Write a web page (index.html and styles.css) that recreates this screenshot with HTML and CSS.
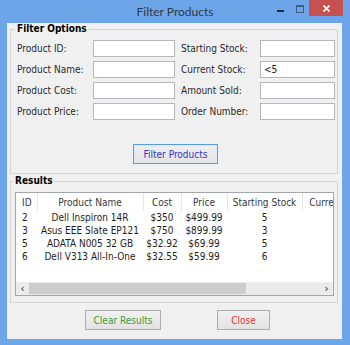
FILE: index.html
```html
<!DOCTYPE html>
<html lang="en">
<head>
    <meta charset="UTF-8">
    <title>Filter Products</title>
    <link rel="stylesheet" href="styles.css">
</head>
<body>
    <div class="window">
        <div class="title-bar">
            <span></span>
            <span class="title">Filter Products</span>
            <div class="controls">
                <span class="ctl-min"></span>
                <span class="ctl-max"></span>
                <span class="ctl-close">
                    <svg width="7" height="7" viewBox="0 0 7 7"><path d="M0.5 0.5L6.5 6.5M6.5 0.5L0.5 6.5" stroke="#fff" stroke-width="1.6"/></svg>
                </span>
            </div>
        </div>
        <div class="client">
            <fieldset class="group filters">
                <legend>Filter Options</legend>
                <div class="fields">
                    <label for="pid">Product ID:</label>
                    <input type="text" id="pid">
                    <label for="sstock">Starting Stock:</label>
                    <input type="text" id="sstock">

                    <label for="pname">Product Name:</label>
                    <input type="text" id="pname">
                    <label for="cstock">Current Stock:</label>
                    <input type="text" id="cstock" value="&lt;5">

                    <label for="pcost">Product Cost:</label>
                    <input type="text" id="pcost">
                    <label for="sold">Amount Sold:</label>
                    <input type="text" id="sold">

                    <label for="pprice">Product Price:</label>
                    <input type="text" id="pprice">
                    <label for="order">Order Number:</label>
                    <input type="text" id="order">
                </div>
                <div class="actions">
                    <button type="button" class="btn btn-filter">Filter Products</button>
                </div>
            </fieldset>
            <fieldset class="group results">
                <legend>Results</legend>
                <div class="listview">
                    <div class="lv-view">
                        <table>
                            <colgroup>
                                <col style="width: 21px">
                                <col style="width: 106px">
                                <col style="width: 38px">
                                <col style="width: 46px">
                                <col style="width: 75px">
                                <col style="width: 76px">
                            </colgroup>
                            <thead>
                                <tr>
                                    <th class="col-id">ID</th>
                                    <th>Product Name</th>
                                    <th>Cost</th>
                                    <th>Price</th>
                                    <th>Starting Stock</th>
                                    <th>Current Stock</th>
                                </tr>
                            </thead>
                            <tbody>
                                <tr><td class="col-id">2</td><td>Dell Inspiron 14R</td><td>$350</td><td>$499.99</td><td>5</td><td></td></tr>
                                <tr><td class="col-id">3</td><td>Asus EEE Slate EP121</td><td>$750</td><td>$899.99</td><td>3</td><td></td></tr>
                                <tr><td class="col-id">5</td><td>ADATA N005 32 GB</td><td>$32.92</td><td>$69.99</td><td>5</td><td></td></tr>
                                <tr><td class="col-id">6</td><td>Dell V313 All-In-One</td><td>$32.55</td><td>$59.99</td><td>6</td><td></td></tr>
                            </tbody>
                        </table>
                    </div>
                    <div class="hscroll">
                        <span class="arrow">&#8249;</span>
                        <div class="track"><div class="thumb"></div></div>
                        <span class="arrow">&#8250;</span>
                    </div>
                </div>
            </fieldset>
            <div class="footer">
                <button type="button" class="btn btn-clear">Clear Results</button>
                <button type="button" class="btn btn-close">Close</button>
            </div>
        </div>
    </div>
</body>
</html>
```

FILE: styles.css
```css
body {
    margin: 0;
    font-family: "DejaVu Sans Condensed", "DejaVu Sans", sans-serif;
    font-size: 10px;
    color: #1e1e1e;
}

.window {
    width: 350px;
    height: 345px;
    box-sizing: border-box;
    background: #6ca6e8;
    padding: 0 8px 6px 7px;
    display: flex;
    flex-direction: column;
}

.title-bar {
    height: 23px;
    margin: 0 -8px 0 -7px;
    display: grid;
    grid-template-columns: 1fr auto 1fr;
    align-items: center;
}

.title {
    font-family: Lato, sans-serif;
    font-size: 12px;
    color: #2d3a48;
}

.controls {
    justify-self: end;
    align-self: start;
    display: flex;
    align-items: flex-start;
    padding-right: 7px;
}

.ctl-min {
    width: 7px;
    height: 2px;
    margin-top: 10px;
    background: #1f2b38;
}

.ctl-max {
    width: 8px;
    height: 8px;
    box-sizing: border-box;
    margin: 5px 5px 0 12px;
    border: 1px solid #3d5f88;
    border-top-width: 2px;
}

.ctl-close {
    width: 34px;
    height: 16px;
    background: #c75050;
    display: flex;
    align-items: center;
    justify-content: center;
}

.client {
    flex: 1;
    background: #f0f0f0;
    display: flex;
    flex-direction: column;
}

.group {
    margin: 0 4px 0 3px;
    border: 1px solid #d5d5d5;
    min-width: 0;
}

.group legend {
    font-weight: bold;
    line-height: 12px;
    padding: 0 2px;
    margin-left: -2px;
    color: #000;
}

.filters {
    padding: 5px 3px 9px 6px;
}

.fields {
    display: grid;
    grid-template-columns: 76px 88px 79px 75px;
    grid-auto-rows: 17px;
    row-gap: 4px;
    align-items: center;
}

.fields label {
    color: #2a2a2a;
}

.fields input {
    box-sizing: border-box;
    width: 82px;
    height: 17px;
    margin: 0;
    padding: 0 3px;
    border: 1px solid #b4b6bb;
    background: #fff;
    font: inherit;
    color: #1e1e1e;
    outline: none;
}

.fields input:nth-of-type(even) {
    width: 75px;
}

.actions {
    display: flex;
    justify-content: center;
    margin-top: 24px;
}

.btn {
    box-sizing: border-box;
    height: 20px;
    padding: 0;
    border: 1px solid #adadad;
    background: linear-gradient(#f0f0f0, #e3e3e3);
    font: inherit;
    cursor: pointer;
}

.btn-filter {
    width: 85px;
    border-color: #5b9be0;
    box-shadow: inset 0 0 0 1px #dfe9f5;
    color: #3a32c8;
}

.results {
    margin-top: 1px;
    padding: 5px 3px 6px 4px;
}

.listview {
    height: 104px;
    box-sizing: border-box;
    border: 1px solid #a3a7ad;
    background: #fff;
    display: flex;
    flex-direction: column;
}

.lv-view {
    flex: 1;
    overflow: hidden;
}

.lv-view table {
    table-layout: fixed;
    width: 362px;
    border-collapse: collapse;
}

.lv-view th {
    height: 18px;
    padding: 0;
    font-weight: normal;
    color: #333a44;
    white-space: nowrap;
    overflow: hidden;
    border-right: 1px solid #e5e5e5;
}

.lv-view td {
    height: 13px;
    padding: 0;
    text-align: center;
    white-space: nowrap;
    color: #1e1e1e;
}

.lv-view .col-id {
    text-align: left;
    padding-left: 6px;
}

.hscroll {
    height: 13px;
    display: flex;
    align-items: stretch;
    background: #ebebeb;
}

.hscroll .arrow {
    width: 13px;
    display: flex;
    align-items: center;
    justify-content: center;
    font-weight: bold;
    font-size: 11px;
    color: #555;
}

.hscroll .track {
    flex: 1;
    display: flex;
    padding: 1px 0;
}

.hscroll .thumb {
    width: 217px;
    background: #cdcdcd;
}

.footer {
    display: flex;
    gap: 56px;
    padding-left: 78px;
    margin-top: 7px;
}

.btn-clear {
    width: 76px;
    color: #3c9a3c;
}

.btn-close {
    width: 53px;
    color: #f0313c;
}
```
